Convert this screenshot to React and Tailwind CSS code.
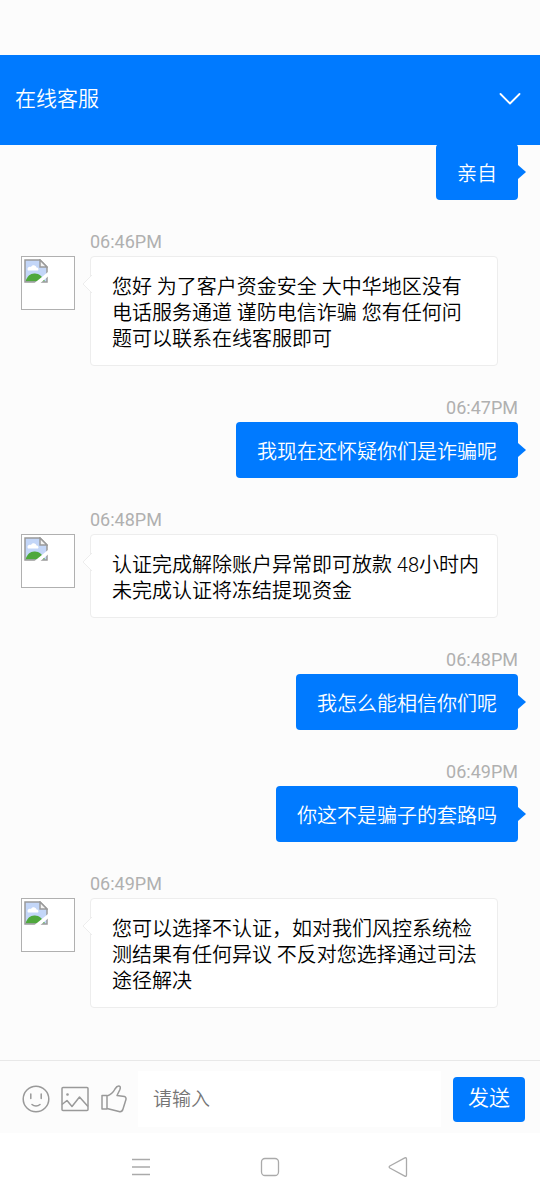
import React from 'react';

const messages = [
  { id: 1, from: 'me', text: '亲自' },
  { id: 2, from: 'agent', time: '06:46PM', text: '您好 为了客户资金安全 大中华地区没有\n电话服务通道 谨防电信诈骗 您有任何问\n题可以联系在线客服即可' },
  { id: 3, from: 'me', time: '06:47PM', text: '我现在还怀疑你们是诈骗呢' },
  { id: 4, from: 'agent', time: '06:48PM', text: '认证完成解除账户异常即可放款 48小时内\n未完成认证将冻结提现资金' },
  { id: 5, from: 'me', time: '06:48PM', text: '我怎么能相信你们呢' },
  { id: 6, from: 'me', time: '06:49PM', text: '你这不是骗子的套路吗' },
  { id: 7, from: 'agent', time: '06:49PM', text: '您可以选择不认证，如对我们风控系统检\n测结果有任何异议 不反对您选择通过司法\n途径解决' },
];

const Avatar = () => (
  <div className="mt-6 size-[54px] shrink-0 border border-[#b0b0b0] bg-white p-0.5">
    <svg viewBox="0 0 24 24" className="size-6">
      <path d="M1 1H16L23 8V23H1Z" fill="#c3d6f8" />
      <path d="M4 11.500c-1.500-2.500 1-4.500 3-3.500 1-3 5.500-2 5.500.500 2 0 2.500 2 1.500 3Z" fill="#fff" />
      <path d="M1.500 22.500C3 17 7 14 11 14.500c4 0 8 3.500 10 8Z" fill="#4fa83d" />
      <path d="M1 1H16L23 8V23H1Z" fill="none" stroke="#9a9a9a" strokeWidth="1.500" />
      <path d="M16 1V8H23Z" fill="#f3f3f3" stroke="#9a9a9a" strokeWidth="1.500" />
      <path d="M24 13v4.500L16.500 24H10.500Z" fill="#fff" />
    </svg>
  </div>
);

const AgentMessage = ({ message }) => (
  <div className="flex shrink-0 gap-[15px] pr-[42px] pl-[21px]">
    <Avatar />
    <div className="min-w-0 flex-1">
      <time className="mb-1 block text-lg leading-5 text-[#b0b0b0]">{message.time}</time>
      <div className="relative rounded-[4px] border border-[#ededed] bg-white pt-[17px] pr-3 pb-[13px] pl-[21px]">
        <svg viewBox="0 0 10 18" className="absolute top-[18px] -left-[9px] h-[18px] w-2.5">
          <path d="M10 0 1 9l9 9" fill="#fff" stroke="#ededed" />
        </svg>
        <p className="text-xl leading-[26px] font-[350] whitespace-pre-line text-black">{message.text}</p>
      </div>
    </div>
  </div>
);

const MyMessage = ({ message }) => (
  <div className="flex shrink-0 flex-col items-end pr-[22px] pl-[21px]">
    {message.time && <time className="mb-1 text-lg leading-5 text-[#b0b0b0]">{message.time}</time>}
    <div className="relative rounded-[4px] bg-[#007aff] px-[21px] pt-[17px] pb-[13px]">
      <svg viewBox="0 0 9 14" className="absolute top-[21px] -right-2 h-3.5 w-[9px]">
        <path d="M0 0H1L9 7 1 14H0Z" fill="#007aff" />
      </svg>
      <p className="text-xl leading-[26px] font-[350] text-white">{message.text}</p>
    </div>
  </div>
);

const Header = () => (
  <header className="z-10 flex h-[90px] shrink-0 items-center justify-between bg-[#007aff] pr-[19px] pb-0.5 pl-[15px] text-white">
    <h1 className="text-[21px] leading-7 font-[350]">在线客服</h1>
    <button type="button" aria-label="收起">
      <svg viewBox="0 0 22 12" className="h-3 w-[22px]" fill="none" stroke="currentColor" strokeWidth="1.8" strokeLinecap="round" strokeLinejoin="round">
        <path d="M1.500 1 11 10.500 20.500 1" />
      </svg>
    </button>
  </header>
);

const Composer = () => (
  <form className="flex shrink-0 items-center border-t border-[#e8e8e8] bg-[#fcfcfc] pt-2.5 pr-[15px] pb-1.5 pl-[22px]" onSubmit={(e) => e.preventDefault()}>
    <div className="flex items-center gap-[11px] text-[#999]">
      <button type="button" aria-label="表情">
        <svg viewBox="0 0 28 28" className="size-7" fill="none" stroke="currentColor" strokeWidth="1.5" strokeLinecap="round">
          <circle cx="14" cy="14" r="12.800" />
          <path d="M8.800 9v4.500M19.200 9v4.500M10 19.500c2.200 2 5.800 2 8 0" />
        </svg>
      </button>
      <button type="button" aria-label="图片">
        <svg viewBox="0 0 28 28" className="size-7" fill="none" stroke="currentColor" strokeWidth="1.5" strokeLinejoin="round">
          <rect x="1" y="2.500" width="26" height="23" rx="1" />
          <path d="M1 19.500 6 15.500 11 21.500 18.500 12 27 21.500" />
          <circle cx="6.500" cy="9.500" r="0.600" fill="currentColor" />
        </svg>
      </button>
      <button type="button" aria-label="点赞">
        <svg viewBox="0 0 28 28" className="size-7" fill="none" stroke="currentColor" strokeWidth="1.500" strokeLinejoin="round">
          <path d="M2 10.500H7V24H2ZM7 11C11.500 9.500 13.500 7 15 4 16.500 1.500 18 .800 19.500 1.200 21 2 20.300 3.500 19.700 5L17 10.500 24.500 11.500C26 12 26.300 13.500 25.800 15L23 24C22.500 25.800 21 27 19 26.500L7 23.500" />
        </svg>
      </button>
    </div>
    <input
      type="text"
      aria-label="请输入"
      placeholder="请输入"
      className="mr-3 ml-2.5 h-14 min-w-0 flex-1 bg-white px-[15px] text-[19px] font-[350] text-[#333] outline-none placeholder:text-[#757575]"
    />
    <button type="submit" className="h-[45px] shrink-0 rounded-[4px] bg-[#007aff] px-[15px] text-[21px] font-[350] text-white">发送</button>
  </form>
);

const SystemNav = () => (
  <nav className="flex h-[67px] shrink-0 items-center justify-center gap-[108px] bg-white text-[#aaa]">
    <button type="button" aria-label="菜单">
      <svg viewBox="0 0 20 20" className="size-5" fill="none" stroke="currentColor" strokeWidth="1.300">
        <path d="M0 2.500H18M0 10H18M0 17.500H18" />
      </svg>
    </button>
    <button type="button" aria-label="主屏幕">
      <svg viewBox="0 0 20 20" className="size-5" fill="none" stroke="currentColor" strokeWidth="1.300">
        <rect x="1.500" y="1.500" width="17" height="17" rx="3.500" />
      </svg>
    </button>
    <button type="button" aria-label="返回">
      <svg viewBox="0 0 20 20" className="size-5" fill="none" stroke="currentColor" strokeWidth="1.300" strokeLinejoin="round">
        <path d="M1.800 9 16.800.900Q18.500.300 18.500 2V18Q18.500 19.700 16.800 19.100L1.800 11Q.500 10 1.800 9Z" />
      </svg>
    </button>
  </nav>
);

const App = () => (
  <div lang="zh-CN" className="flex h-screen flex-col bg-[#fcfcfc] font-[Roboto,'Noto_Sans_CJK_SC',sans-serif]">
    <div className="h-[55px] shrink-0" />
    <Header />
    {/* newest messages stay at the bottom, older ones slide under the header */}
    <main className="flex min-h-0 flex-1 flex-col justify-end gap-8 overflow-hidden pb-[52px]">
      {messages.map((message) =>
        message.from === 'me' ? (
          <MyMessage key={message.id} message={message} />
        ) : (
          <AgentMessage key={message.id} message={message} />
        )
      )}
    </main>
    <Composer />
    <SystemNav />
  </div>
);

export default App;
